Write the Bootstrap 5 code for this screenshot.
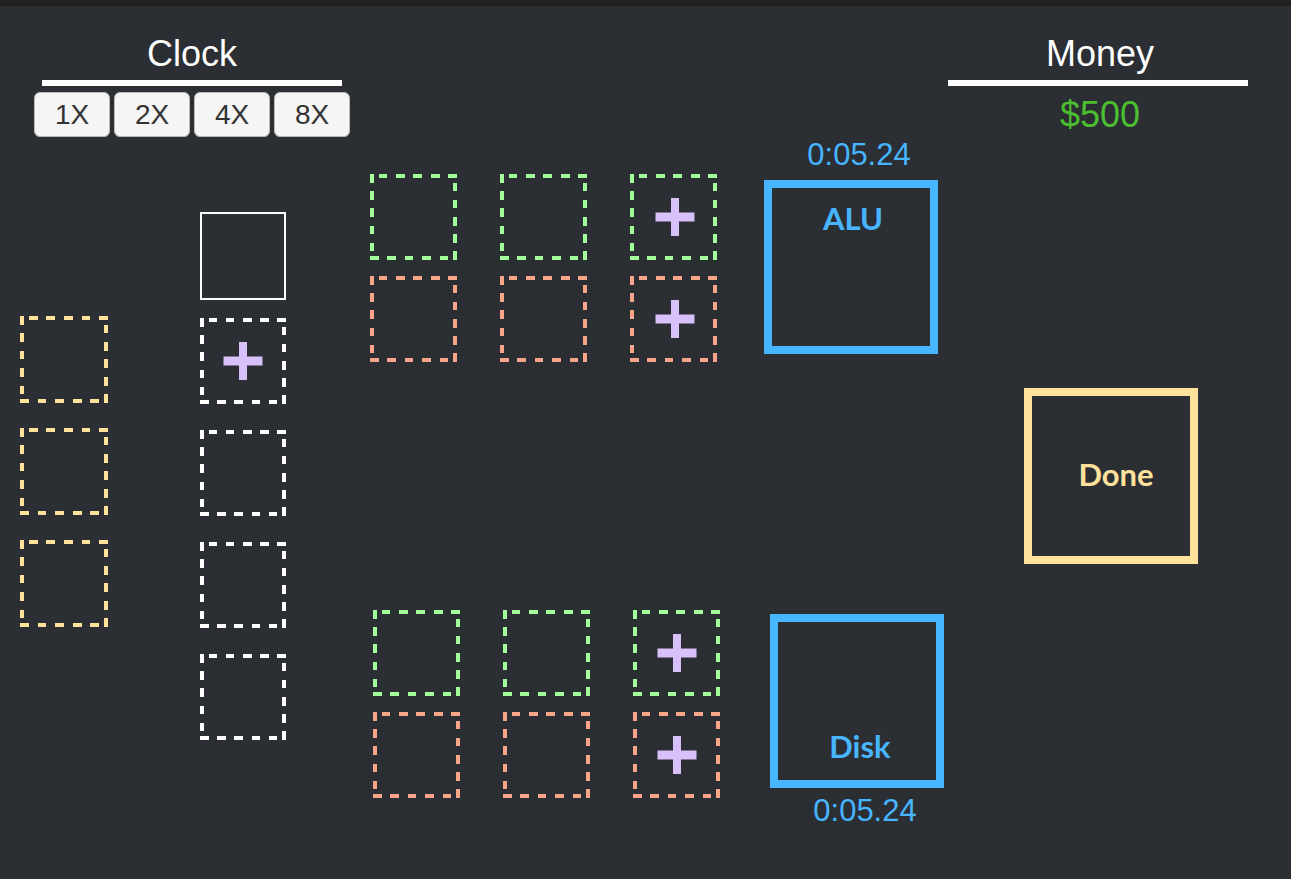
<!DOCTYPE html>
<html lang="en">
<head>
<meta charset="utf-8">
<meta name="viewport" content="width=device-width, initial-scale=1">
<title>Scheduler</title>
<link href="https://cdn.jsdelivr.net/npm/bootstrap@5.3.0/dist/css/bootstrap.min.css" rel="stylesheet">
<style>
  body { background: #2b2e33; color: #fff; font-family: "Liberation Sans", Arial, sans-serif; border-top: 6px solid #212121; }
  .topbar { padding: 28px 43px 0 34px; }
  .panel-title { font-size: 36px; line-height: 40px; margin: 0; font-weight: 400; }
  .rule { width: 300px; height: 6px; background: #fff; margin: 6px auto 0; }
  .speeds { gap: 4px; margin-top: 6px; }
  .speed { width: 76px; height: 45px; padding: 0; font-size: 28px; line-height: 40px; color: #333; background: #f5f5f5; border: 1px solid #b9babb; border-radius: 6px; }
  .money .panel-title, .cash { padding-left: 4px; }
  .cash { font-size: 36px; line-height: 40px; margin-top: 9px; color: #4bbf30; }

  /* Column tracks share the window width in fixed proportions */
  .board { display: grid; grid-template-columns: 180fr 170fr 654fr 174fr; padding: 0 93px 40px 20px; }
  .done-lane { padding-top: 179px; gap: 25px; }
  .ready-lane { padding-top: 75px; gap: 26px; }
  .ready-lane .slot-solid { margin-bottom: -8px; }
  .exit-lane { padding-top: 251px; }

  .slot {
    --c: #fff;
    width: 86px; height: 86px; padding: 0; border: 0; flex: none;
    background:
      repeating-linear-gradient(90deg, transparent 0 10%, var(--c) 10% 20%) top / 100% 4px no-repeat,
      repeating-linear-gradient(180deg, transparent 0 10%, var(--c) 10% 20%) right / 4px 100% no-repeat,
      repeating-linear-gradient(90deg, var(--c) 0 10%, transparent 10% 20%) bottom / 100% 4px no-repeat,
      repeating-linear-gradient(180deg, var(--c) 0 10%, transparent 10% 20%) left / 4px 100% no-repeat;
  }
  .slot-solid { background: none; border: 2px solid #fff; height: 88px; }
  .slot-yellow { --c: #ffe19c; width: 88px; height: 87px; }
  .slot-green { --c: #a3ff9c; width: 87px; }
  .slot-orange { --c: #f8a58a; width: 87px; }
  .plus { width: 40px; height: 40px; fill: #d8c0fa; }

  .queue { display: grid; grid-template-columns: repeat(3, 87px); column-gap: 43px; row-gap: 16px; }
  .alu .plus { margin-left: 3px; }
  .station { width: 174px; height: 174px; border: 8px solid #47b5ff; color: #47b5ff; font: 700 31px/40px Lato, sans-serif; }
  .station-done { border-color: #ffe19c; color: #ffe19c; height: 176px; padding: 0 0 4px 10px; }
  .timer { font-size: 31px; line-height: 32px; color: #47b5ff; padding-left: 16px; }
  .alu { padding-top: 2px; gap: 47px; }
  .alu .queue { padding-top: 35px; }
  .alu .timer { padding-bottom: 9px; }
  .alu .station { padding-top: 10px; padding-left: 4px; }
  .disk { margin-top: 248px; padding-left: 3px; gap: 50px; }
  .disk .unit { padding-top: 4px; }
  .disk .station { padding-bottom: 14px; padding-left: 6px; }
  .disk .timer { padding-top: 7px; }
</style>
</head>
<body>
<svg class="d-none" aria-hidden="true">
  <symbol id="plus" viewBox="0 0 40 40"><path d="M16 1h8v14.500h15.500v9H24V39h-8V24.500H.5v-9H16z"/></symbol>
</svg>

<header class="topbar d-flex justify-content-between align-items-start">
  <section class="text-center" aria-label="Clock">
    <h1 class="panel-title">Clock</h1>
    <div class="rule"></div>
    <div class="speeds d-flex">
      <button type="button" class="speed">1X</button>
      <button type="button" class="speed">2X</button>
      <button type="button" class="speed">4X</button>
      <button type="button" class="speed">8X</button>
    </div>
  </section>
  <section class="money text-center" aria-label="Money">
    <h2 class="panel-title">Money</h2>
    <div class="rule"></div>
    <div class="cash">$500</div>
  </section>
</header>

<main class="board">
  <div class="done-lane d-flex flex-column">
    <div class="slot slot-yellow"></div>
    <div class="slot slot-yellow"></div>
    <div class="slot slot-yellow"></div>
  </div>

  <div class="ready-lane d-flex flex-column">
    <div class="slot slot-solid"></div>
    <button type="button" class="slot d-flex align-items-center justify-content-center" aria-label="Add ready slot"><svg class="plus"><use href="#plus"/></svg></button>
    <div class="slot"></div>
    <div class="slot"></div>
    <div class="slot"></div>
  </div>

  <div>
    <section class="alu d-flex align-items-start">
      <div class="queue">
        <div class="slot slot-green"></div>
        <div class="slot slot-green"></div>
        <button type="button" class="slot slot-green d-flex align-items-center justify-content-center" aria-label="Add ALU input slot"><svg class="plus"><use href="#plus"/></svg></button>
        <div class="slot slot-orange"></div>
        <div class="slot slot-orange"></div>
        <button type="button" class="slot slot-orange d-flex align-items-center justify-content-center" aria-label="Add ALU output slot"><svg class="plus"><use href="#plus"/></svg></button>
      </div>
      <div class="unit">
        <div class="timer text-center">0:05.24</div>
        <div class="station d-flex align-items-start justify-content-center">ALU</div>
      </div>
    </section>

    <section class="disk d-flex align-items-start">
      <div class="queue">
        <div class="slot slot-green"></div>
        <div class="slot slot-green"></div>
        <button type="button" class="slot slot-green d-flex align-items-center justify-content-center" aria-label="Add disk input slot"><svg class="plus"><use href="#plus"/></svg></button>
        <div class="slot slot-orange"></div>
        <div class="slot slot-orange"></div>
        <button type="button" class="slot slot-orange d-flex align-items-center justify-content-center" aria-label="Add disk output slot"><svg class="plus"><use href="#plus"/></svg></button>
      </div>
      <div class="unit">
        <div class="station d-flex align-items-end justify-content-center">Disk</div>
        <div class="timer text-center">0:05.24</div>
      </div>
    </section>
  </div>

  <div class="exit-lane">
    <div class="station station-done d-flex align-items-center justify-content-center">Done</div>
  </div>
</main>
<script src="https://cdn.jsdelivr.net/npm/bootstrap@5.3.0/dist/js/bootstrap.bundle.min.js"></script>
</body>
</html>
